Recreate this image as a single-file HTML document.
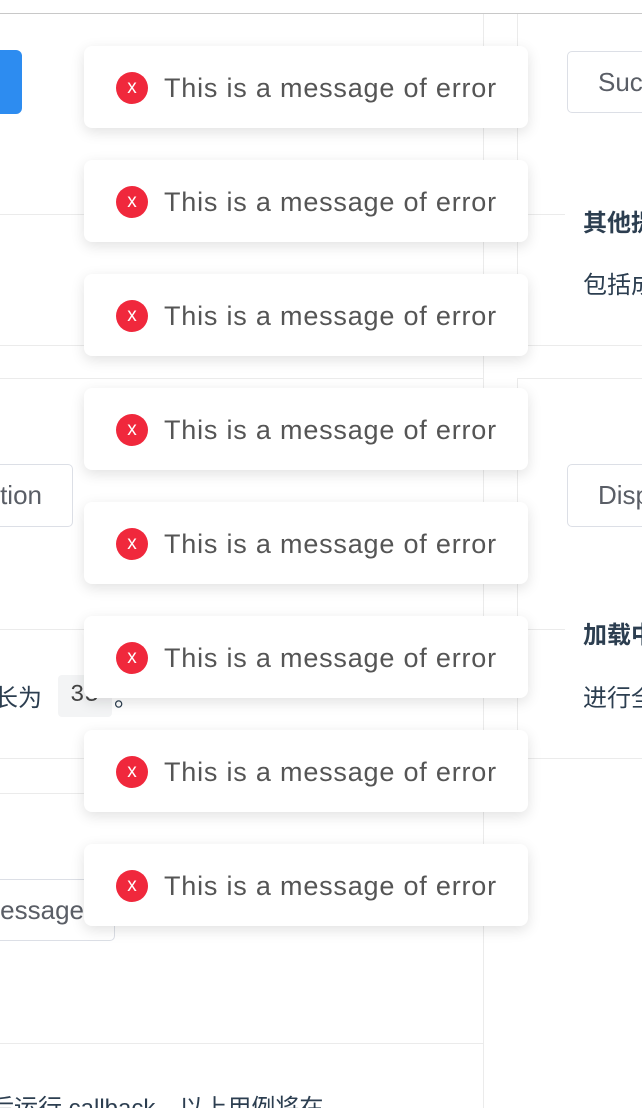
<!DOCTYPE html>
<html style="overflow:hidden"><head><meta charset="utf-8"><style>
*{margin:0;padding:0;box-sizing:border-box}
html,body{width:642px;height:1108px;overflow:hidden}
body{background:#fff;position:relative;font-family:"Liberation Sans","Noto Sans CJK SC",sans-serif;color:#2c3e50}
.a{position:absolute}
.h{position:absolute;height:1px;background:#ebebeb}
.v{position:absolute;width:1px;background:#ebebeb}
.btn{position:absolute;border:1px solid #dcdfe6;border-radius:5px;background:#fff;color:#5a5e66;font-size:26px;line-height:60px;overflow:hidden;white-space:nowrap}
.msg{position:absolute;left:84px;width:444px;height:82px;background:#fff;border-radius:8px;box-shadow:0 4px 14px rgba(0,0,0,.12)}
.msg i{position:absolute;left:32px;top:26px;width:32px;height:32px;border-radius:50%;background:#f0283c;color:#fff;font-style:normal;font-size:19px;line-height:31px;text-align:center}
.msg span{position:absolute;left:80px;top:25px;font-size:27px;letter-spacing:0.8px;color:#555;line-height:34px;white-space:nowrap}
.cn{position:absolute;font-size:24px;white-space:nowrap}
</style></head><body>
<div class="h" style="top:13px;left:0;width:642px;background:#c8c8c8"></div>
<div class="v" style="left:483px;top:14px;height:1094px"></div>
<div class="v" style="left:517px;top:14px;height:331px"></div>
<div class="v" style="left:517px;top:378px;height:380px"></div>
<div class="a" style="left:-10px;top:50px;width:32px;height:64px;background:#2d8cf0;border-radius:6px"></div>
<div class="btn" style="left:567px;top:51px;width:90px;height:62px;padding-left:30px">Success</div>
<div class="h" style="top:214px;left:0;width:483px"></div>
<div class="h" style="top:214px;left:517px;width:48px"></div>
<div class="cn" style="left:583px;top:203px;font-weight:bold">其他提示</div>
<div class="cn" style="left:583px;top:265px">包括成功</div>
<div class="h" style="top:345px;left:0;width:642px"></div>
<div class="h" style="top:378px;left:0;width:483px"></div>
<div class="h" style="top:378px;left:517px;width:125px"></div>
<div class="btn" style="left:-30px;top:464px;width:103px;height:63px;text-align:right;padding-right:30px">tion</div>
<div class="btn" style="left:567px;top:464px;width:90px;height:63px;padding-left:30px">Display</div>
<div class="h" style="top:629px;left:0;width:483px"></div>
<div class="h" style="top:629px;left:517px;width:48px"></div>
<div class="cn" style="left:583px;top:615px;font-weight:bold">加载中</div>
<div class="cn" style="left:583px;top:678px">进行全局</div>
<div class="cn" style="left:-6px;top:678px">长为</div>
<div class="a" style="left:58px;top:675px;width:54px;height:42px;background:#f3f4f5;border-radius:4px;font-family:'Liberation Mono',monospace;font-size:24px;line-height:42px;padding-left:12px;color:#444">33</div>
<div class="cn" style="left:114px;top:678px">。</div>
<div class="cn" style="left:410px;top:678px;color:#999">&lt; &gt;</div>
<div class="h" style="top:758px;left:0;width:483px"></div>
<div class="h" style="top:758px;left:517px;width:125px"></div>
<div class="h" style="top:793px;left:0;width:483px"></div>
<div class="btn" style="left:-80px;top:879px;width:195px;height:62px;text-align:right;padding-right:30px">message</div>
<div class="h" style="top:1043px;left:0;width:483px"></div>
<div class="cn" style="left:-10px;top:1088px;color:#2c3e50">后运行 callback，以上用例将在</div>

<div class="msg" style="top:46px"><i>x</i><span>This is a message of error</span></div>
<div class="msg" style="top:160px"><i>x</i><span>This is a message of error</span></div>
<div class="msg" style="top:274px"><i>x</i><span>This is a message of error</span></div>
<div class="msg" style="top:388px"><i>x</i><span>This is a message of error</span></div>
<div class="msg" style="top:502px"><i>x</i><span>This is a message of error</span></div>
<div class="msg" style="top:616px"><i>x</i><span>This is a message of error</span></div>
<div class="msg" style="top:730px"><i>x</i><span>This is a message of error</span></div>
<div class="msg" style="top:844px"><i>x</i><span>This is a message of error</span></div>
</body></html>
